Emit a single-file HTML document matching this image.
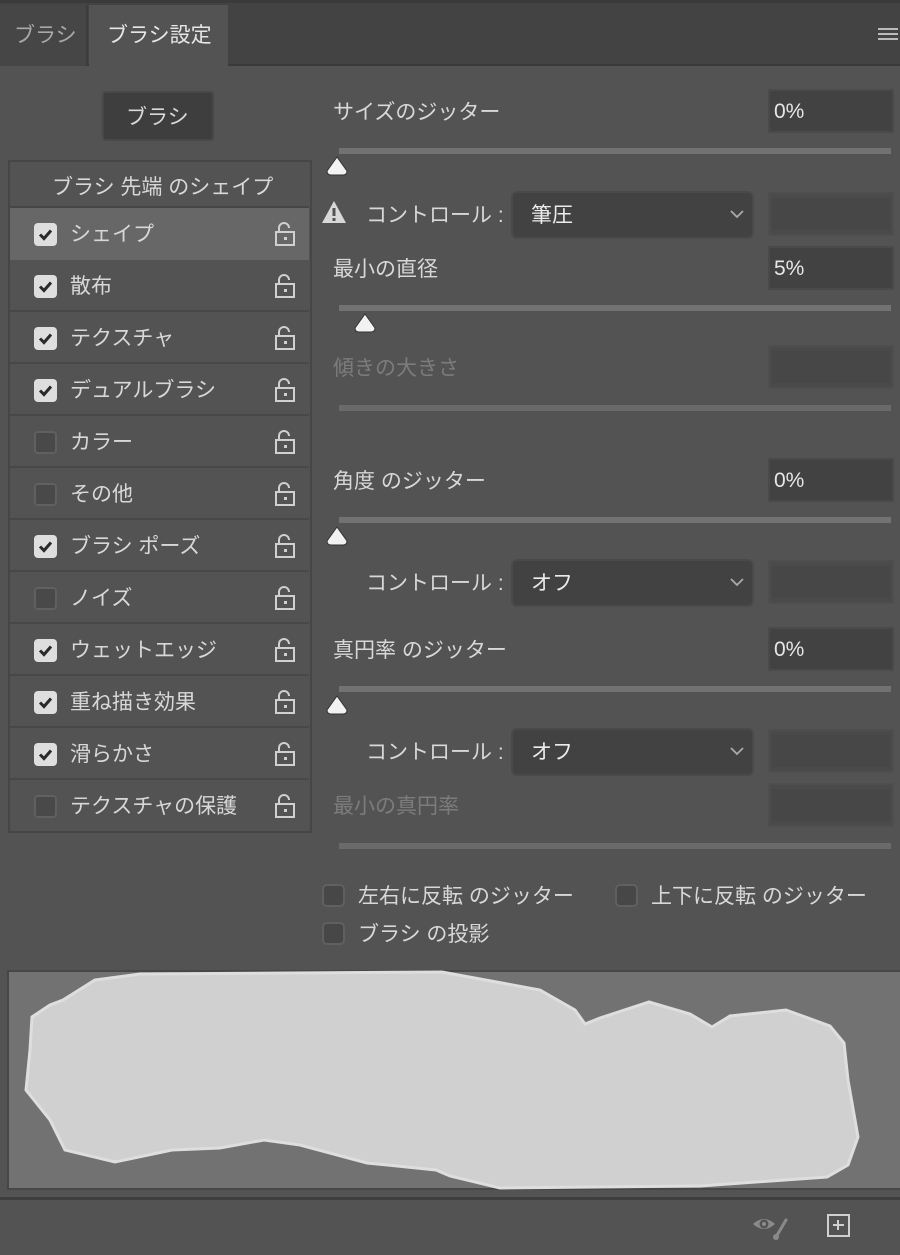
<!DOCTYPE html>
<html><head><meta charset="utf-8"><style>
*{margin:0;padding:0;box-sizing:border-box}
body{width:900px;height:1255px;background:#535353;position:relative;overflow:hidden;font-family:"Liberation Sans","Noto Sans CJK JP",sans-serif;color:#d8d8d8;font-size:21px}
.a{position:absolute}
.lbl{position:absolute;line-height:30px;white-space:nowrap;margin-top:2px}
.dis{color:#7c7c7c}
.inp{position:absolute;left:768px;width:126px;height:44px;background:#424242;border:2px solid #4a4a4a;line-height:42px;padding-left:4px;color:#e6e6e6}
.box{position:absolute;left:768px;width:126px;height:44px;background:#4a4a4a;border:2px solid #4e4e4e}
.box::after{content:"";position:absolute;left:2px;top:4px;right:2px;bottom:4px;background:#474747}
.trk{position:absolute;left:339px;width:552px;height:6px;background:#727272}
.trk.d{background:#6a6a6a}
.th{position:absolute;width:22px;height:20px}
.dd{position:absolute;left:511px;width:243px;height:48px;background:#424242;border:2px solid #4a4a4a;border-radius:6px;line-height:46px;padding-left:18px;color:#ececec}
.dd svg{position:absolute;right:8px;top:17px}
.row{position:absolute;left:10px;width:299px;height:52px;border-bottom:2px solid #484848}
.row .t{position:absolute;left:60px;top:12px;line-height:30px}
.cb{position:absolute;left:24px;top:15px;width:23px;height:23px;border-radius:4px;background:#dedede}
.cb.u{background:#494949;border:2px solid #606060}
.lk{position:absolute;left:263px;top:13px}
.cb2{position:absolute;width:23px;height:23px;border-radius:5px;background:#474747;border:2px solid #606060}
</style></head><body>
<div class="a" style="left:0;top:0;width:900px;height:66px;background:#434343;border-top:3px solid #3a3a3a;border-bottom:2px solid #3a3a3a"></div>
<div class="a" style="left:0;top:5px;width:88px;height:61px;background:#464646;border-right:2px solid #3c3c3c"></div>
<div class="lbl" style="left:14px;top:19px;color:#a8a8a8">ブラシ</div>
<div class="a" style="left:89px;top:5px;width:139px;height:63px;background:#535353"></div>
<div class="lbl" style="left:107px;top:19px;color:#e6e6e6">ブラシ設定</div>
<div class="a" style="left:878px;top:28px;width:20px;height:2px;background:#bbb;box-shadow:0 5px 0 #bbb,0 10px 0 #bbb"></div>
<div class="a" style="left:102px;top:91px;width:112px;height:50px;background:#3e3e3e;border:2px solid #484848;border-radius:4px"></div>
<div class="lbl" style="left:126px;top:101px">ブラシ</div>
<div class="a" style="left:8px;top:160px;width:304px;height:673px;border:2px solid #464646"></div>
<div class="lbl" style="left:52px;top:171px">ブラシ 先端 のシェイプ</div>
<div class="a" style="left:10px;top:206px;width:299px;height:2px;background:#464646"></div>
<div class="row" style="top:208px;background:#676767;border-bottom-color:#676767"><div class="cb"><svg width="23" height="23"><path d="M6 11.5l4 4 7-8" stroke="#2a2a2a" stroke-width="3" fill="none"/></svg></div><div class="t">シェイプ</div><svg class="lk" width="24" height="26"><path d="M6 11V7a5 5 0 0 1 10 0" stroke="#d0d0d0" stroke-width="2" fill="none"/><rect x="3" y="11" width="18" height="13" stroke="#d0d0d0" stroke-width="2" fill="none"/><rect x="11" y="16" width="3" height="3" fill="#d0d0d0"/></svg></div>
<div id="rows"></div>
<script>
var items=[["散布",1],["テクスチャ",1],["デュアルブラシ",1],["カラー",0],["その他",0],["ブラシ ポーズ",1],["ノイズ",0],["ウェットエッジ",1],["重ね描き効果",1],["滑らかさ",1],["テクスチャの保護",0]];
var h="";items.forEach(function(it,i){var top=260+i*52;
h+='<div class="row" style="top:'+top+'px'+(i==10?';border-bottom:none':'')+'">'+(it[1]?'<div class="cb"><svg width="23" height="23"><path d="M6 11.5l4 4 7-8" stroke="#2a2a2a" stroke-width="3" fill="none"/></svg></div>':'<div class="cb u"></div>')+'<div class="t">'+it[0]+'</div><svg class="lk" width="24" height="26"><path d="M6 11V7a5 5 0 0 1 10 0" stroke="#d0d0d0" stroke-width="2" fill="none"/><rect x="3" y="11" width="18" height="13" stroke="#d0d0d0" stroke-width="2" fill="none"/><rect x="11" y="16" width="3" height="3" fill="#d0d0d0"/></svg></div>';});
document.getElementById("rows").outerHTML=h;
</script>
<div class="lbl" style="left:333px;top:96px">サイズのジッター</div>
<div class="inp" style="top:89px">0%</div>
<div class="trk" style="top:148px"></div>
<svg class="th" style="left:326px;top:156px"><path d="M11 1 L21 15 Q21 19 17 19 L5 19 Q1 19 1 15 Z" fill="#f2f2f2" stroke="#333" stroke-width="1"/></svg>
<svg class="a" style="left:321px;top:200px" width="26" height="24"><path d="M13 1 L25 23 L1 23 Z" fill="#d8d8d8"/><rect x="11.5" y="8" width="3" height="8" fill="#535353"/><rect x="11.5" y="18" width="3" height="3" fill="#535353"/></svg>
<div class="lbl" style="left:366px;top:199px">コントロール :</div>
<div class="dd" style="top:191px">筆圧<svg width="14" height="9"><path d="M1 1l6 6 6-6" stroke="#aaa" stroke-width="1.8" fill="none"/></svg></div>
<div class="box" style="top:192px"></div>
<div class="lbl" style="left:333px;top:253px">最小の直径</div>
<div class="inp" style="top:246px">5%</div>
<div class="trk" style="top:305px"></div>
<svg class="th" style="left:354px;top:313px"><path d="M11 1 L21 15 Q21 19 17 19 L5 19 Q1 19 1 15 Z" fill="#f2f2f2" stroke="#333" stroke-width="1"/></svg>
<div class="lbl dis" style="left:333px;top:352px">傾きの大きさ</div>
<div class="box" style="top:345px"></div>
<div class="trk d" style="top:405px"></div>
<div class="lbl" style="left:333px;top:465px">角度 のジッター</div>
<div class="inp" style="top:458px">0%</div>
<div class="trk" style="top:517px"></div>
<svg class="th" style="left:326px;top:526px"><path d="M11 1 L21 15 Q21 19 17 19 L5 19 Q1 19 1 15 Z" fill="#f2f2f2" stroke="#333" stroke-width="1"/></svg>
<div class="lbl" style="left:366px;top:567px">コントロール :</div>
<div class="dd" style="top:559px">オフ<svg width="14" height="9"><path d="M1 1l6 6 6-6" stroke="#aaa" stroke-width="1.8" fill="none"/></svg></div>
<div class="box" style="top:560px"></div>
<div class="lbl" style="left:333px;top:634px">真円率 のジッター</div>
<div class="inp" style="top:627px">0%</div>
<div class="trk" style="top:686px"></div>
<svg class="th" style="left:326px;top:695px"><path d="M11 1 L21 15 Q21 19 17 19 L5 19 Q1 19 1 15 Z" fill="#f2f2f2" stroke="#333" stroke-width="1"/></svg>
<div class="lbl" style="left:366px;top:736px">コントロール :</div>
<div class="dd" style="top:728px">オフ<svg width="14" height="9"><path d="M1 1l6 6 6-6" stroke="#aaa" stroke-width="1.8" fill="none"/></svg></div>
<div class="box" style="top:729px"></div>
<div class="lbl dis" style="left:333px;top:790px">最小の真円率</div>
<div class="box" style="top:783px"></div>
<div class="trk d" style="top:843px"></div>
<div class="cb2" style="left:322px;top:884px"></div>
<div class="lbl" style="left:358px;top:880px">左右に反転 のジッター</div>
<div class="cb2" style="left:615px;top:884px"></div>
<div class="lbl" style="left:651px;top:880px">上下に反転 のジッター</div>
<div class="cb2" style="left:322px;top:922px"></div>
<div class="lbl" style="left:358px;top:918px">ブラシ の投影</div>
<div class="a" style="left:7px;top:970px;width:893px;height:220px;background:#727272;border:2px solid #474747;border-right:none"></div>
<svg class="a" style="left:0;top:0" width="900" height="1255"><path d="M95 980 L140 974 L442 972 L540 990 L575 1010 L585 1024 L600 1018 L649 1002 L690 1014 L712 1027 L730 1016 L786 1010 L830 1026 L844 1043 L848 1080 L858 1137 L848 1165 L827 1177 L700 1186 L500 1188 L450 1176 L436 1170 L367 1163 L300 1145 L264 1140 L220 1148 L172 1150 L115 1162 L65 1150 L50 1120 L26 1090 L30 1050 L32 1017 L50 1005 L63 1000 Z" fill="#d0d0d0" stroke="#dedede" stroke-width="3"/></svg>
<div class="a" style="left:0;top:1197px;width:900px;height:3px;background:#3e3e3e"></div>
<svg class="a" style="left:752px;top:1212px" width="44" height="30"><path d="M1 12 Q12 2 23 12 Q12 22 1 12 Z" fill="#8a8a8a"/><circle cx="12" cy="12" r="4.5" fill="#535353"/><circle cx="12" cy="12" r="2" fill="#8a8a8a"/><path d="M24 25 L34 8" stroke="#8a8a8a" stroke-width="3" stroke-linecap="round"/><circle cx="24" cy="25" r="3" fill="#8a8a8a"/></svg>
<div class="a" style="left:827px;top:1214px;width:23px;height:23px;border:2px solid #d0d0d0"></div>
<div class="a" style="left:833px;top:1224px;width:11px;height:2px;background:#d0d0d0"></div>
<div class="a" style="left:837px;top:1220px;width:2px;height:10px;background:#d0d0d0"></div>
</body></html>
